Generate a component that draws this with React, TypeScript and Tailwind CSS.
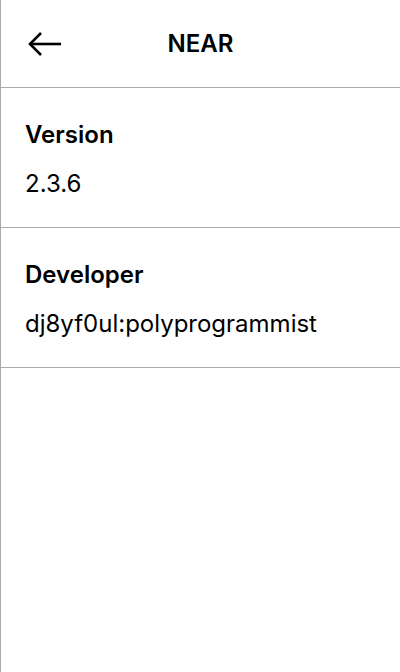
export default function App() {
  const rows = [
    { label: 'Version', value: '2.3.6' },
    { label: 'Developer', value: 'dj8yf0ul:polyprogrammist' },
  ];

  return (
    <div className="min-h-[672px] border-l border-[#a9a9a9] bg-white text-black font-['Inter','Noto_Sans',sans-serif]">
      <header className="relative flex h-[88px] items-center justify-center border-b border-[#a9a9a9]">
        <button className="absolute left-[24px] top-[24px] flex h-[40px] w-[40px] items-center justify-center">
          <svg width="36" height="28" viewBox="0 0 36 28" fill="none" stroke="black" strokeWidth="2.6" strokeLinecap="butt" strokeLinejoin="miter">
            <path d="M34 14H4" />
            <path d="M14 3L3 14l11 11" />
          </svg>
        </button>
        <h1 className="text-[24px] font-semibold leading-[28px]">NEAR</h1>
      </header>

      {rows.map((row) => (
        <section key={row.label} className="border-b border-[#a9a9a9] px-[24px] pt-[33px] pb-[29px]">
          <div className="text-[24px] font-semibold leading-[28px]">{row.label}</div>
          <div className="mt-[21px] text-[24px] leading-[28px]">{row.value}</div>
        </section>
      ))}
    </div>
  );
}
